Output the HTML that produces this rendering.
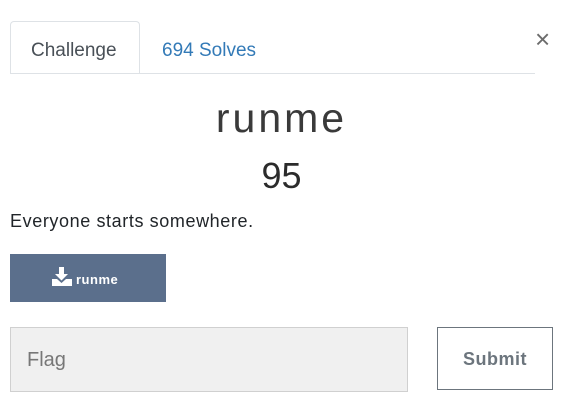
<!DOCTYPE html>
<html><head><style>
body{margin:0;width:569px;height:418px;background:#fff;font-family:"Liberation Sans",sans-serif;position:relative;overflow:hidden;color:#212529}
.a{position:absolute}
</style></head><body>
<div class="a" style="left:10px;top:21px;width:128px;height:52px;border:1px solid #dee2e6;border-bottom:none;border-radius:4px 4px 0 0;background:#fff"></div>
<div class="a" style="left:10px;top:73px;width:525px;height:1px;background:#dee2e6"></div>
<div class="a" style="left:31px;top:40px;font-size:19px;color:#495057">Challenge</div>
<div class="a" style="left:162px;top:40px;font-size:19px;color:#337ab7">694 Solves</div>
<div class="a" style="left:535px;top:26px;font-size:26px;color:#6c6c6c;line-height:26px">×</div>
<div class="a" style="left:0;width:563px;top:95px;text-align:center;font-size:41px;font-weight:300;letter-spacing:3px;color:#3a3a3a">runme</div>
<div class="a" style="left:0;width:563px;top:155px;text-align:center;font-size:36px;color:#2b2b2b">95</div>
<div class="a" style="left:10px;top:211px;font-size:18px;letter-spacing:.6px;color:#212529">Everyone starts somewhere.</div>
<div class="a" style="left:10px;top:254px;width:156px;height:48px;background:#5b6f8c"></div>
<svg class="a" style="left:52px;top:267px" width="20" height="19" viewBox="0 0 20 19"><path d="M7 0h5v7h4l-6.5 6.5L3 7h4z" fill="#fff"/><path d="M0 12h5l4.5 4 4.5-4h6v7H0z" fill="#fff"/></svg>
<div class="a" style="left:76px;top:272px;font-size:13px;font-weight:bold;color:#fff;letter-spacing:.5px">runme</div>
<div class="a" style="left:10px;top:327px;width:396px;height:63px;background:#f0f0f0;border:1px solid #d0d0d0"></div>
<div class="a" style="left:27px;top:349px;font-size:20px;color:#777">Flag</div>
<div class="a" style="left:437px;top:327px;width:114px;height:61px;border:1px solid #6c757d;text-align:center;line-height:63px;font-size:18px;font-weight:bold;color:#6c757d;letter-spacing:.5px">Submit</div>
</body></html>
